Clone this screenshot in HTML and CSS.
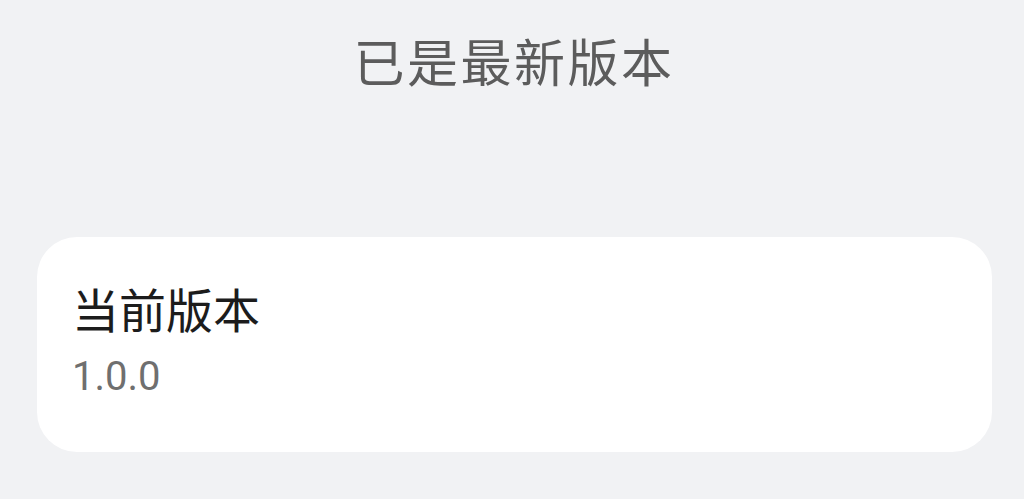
FILE: index.html
```html
<!DOCTYPE html>
<html lang="zh">
<head>
<meta charset="utf-8">
<link rel="stylesheet" href="styles.css">
</head>
<body>
<div class="page">
  <div class="status">已是最新版本</div>
  <div class="card">
    <div class="card-title">当前版本</div>
    <div class="card-value">1.0.0</div>
  </div>
</div>
</body>
</html>
```
FILE: styles.css
```css
html, body {
  margin: 0;
  padding: 0;
  background: #f1f2f4;
  width: 1024px;
  height: 499px;
  overflow: hidden;
}
.page {
  display: flex;
  flex-direction: column;
  align-items: center;
  padding-top: 30px;
  font-family: Roboto, "Noto Sans CJK SC", sans-serif;
}
.status {
  font-size: 51px;
  line-height: 70px;
  color: #5c5c5c;
  letter-spacing: 2.5px;
  margin-left: 4px;
}
.card {
  margin-top: 137px;
  align-self: stretch;
  margin-left: 37px;
  margin-right: 32px;
  height: 215px;
  background: #ffffff;
  border-radius: 40px;
  padding: 45px 35px 0;
  box-sizing: border-box;
  display: flex;
  flex-direction: column;
}
.card-title {
  font-size: 47px;
  line-height: 60px;
  color: #1c1c1c;
}
.card-value {
  margin-top: 10px;
  font-size: 40px;
  line-height: 50px;
  color: #6f6f6f;
}
```
